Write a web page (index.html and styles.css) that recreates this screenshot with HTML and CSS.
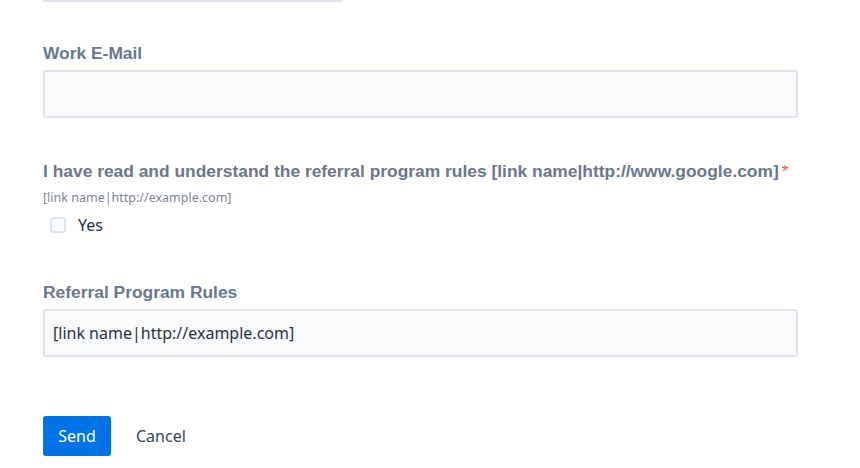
FILE: index.html
```html
<!DOCTYPE html>
<html lang="en">
<head>
<meta charset="utf-8">
<title>Referral form</title>
<link rel="stylesheet" href="styles.css">
</head>
<body>
<form class="form">
  <div class="stub"></div>

  <div class="field field-email">
    <label class="label" for="email">Work E-Mail</label>
    <input class="input" id="email" type="email">
  </div>

  <div class="field field-rules">
    <label class="label">I have read and understand the referral program rules [link name|http://www.google.com]<span class="req">*</span></label>
    <div class="desc">[link name|http://example.com]</div>
    <label class="check-row"><span class="checkbox"></span><span class="check-text">Yes</span></label>
  </div>

  <div class="field field-text">
    <label class="label" for="rules">Referral Program Rules</label>
    <div class="input input-filled" id="rules">[link name|http://example.com]</div>
  </div>

  <div class="actions">
    <button type="button" class="btn-send">Send</button>
    <button type="button" class="btn-cancel">Cancel</button>
  </div>
</form>
</body>
</html>
```

FILE: styles.css
```css
* { box-sizing: border-box; }

html, body {
  margin: 0;
  padding: 0;
  background: #ffffff;
}

body {
  font-family: "Noto Sans", "Open Sans", sans-serif;
  color: #33475b;
}

.form {
  padding-left: 43px;
  width: 798px;
}

.stub {
  width: 300px;
  height: 1px;
  border: 2px solid #dfe3eb;
  border-top: 0;
  border-radius: 0 0 3px 3px;
}

.field { display: flex; flex-direction: column; align-items: flex-start; }

.label {
  display: block;
  font-family: "Liberation Sans", Arial, sans-serif;
  font-weight: 700;
  font-size: 17.4px;
  line-height: 20px;
  color: #68788f;
  white-space: nowrap;
}

.req {
  color: #f5543b;
  margin-left: 3px;
  font-weight: 400;
}

.field-email { margin-top: 41px; }
.field-rules { margin-top: 43px; }
.field-text { margin-top: 45px; }

.input {
  margin-top: 7px;
  width: 755px;
  height: 48px;
  border: 2px solid #dfe3eb;
  border-radius: 3px;
  background: #f8fafc;
  font-family: "Noto Sans", sans-serif;
  font-size: 16px;
  color: #33475b;
  padding: 0 8px;
  outline: none;
}

.input-filled {
  display: flex;
  align-items: center;
  color: #26323f;
}

.desc {
  margin-top: 8px;
  font-size: 12.5px;
  line-height: 18px;
  color: #7c8594;
}

.check-row {
  margin-top: 6px;
  display: flex;
  align-items: center;
  height: 24px;
  padding-left: 7px;
}

.checkbox {
  width: 16px;
  height: 16px;
  border: 2px solid #dfe3eb;
  border-radius: 3px;
  background: #f8fafc;
}

.check-text {
  margin-left: 12px;
  font-size: 16px;
  color: #26323f;
}

.actions {
  margin-top: 59px;
  display: flex;
  align-items: center;
  gap: 25px;
}

.btn-send {
  width: 68px;
  height: 40px;
  border: 0;
  border-radius: 3px;
  background: #0073e6;
  color: #ffffff;
  font-family: "Noto Sans", sans-serif;
  font-size: 16px;
  padding: 0;
}

.btn-cancel {
  border: 0;
  background: none;
  padding: 0;
  font-family: "Noto Sans", sans-serif;
  font-size: 16px;
  color: #33475b;
}
```
